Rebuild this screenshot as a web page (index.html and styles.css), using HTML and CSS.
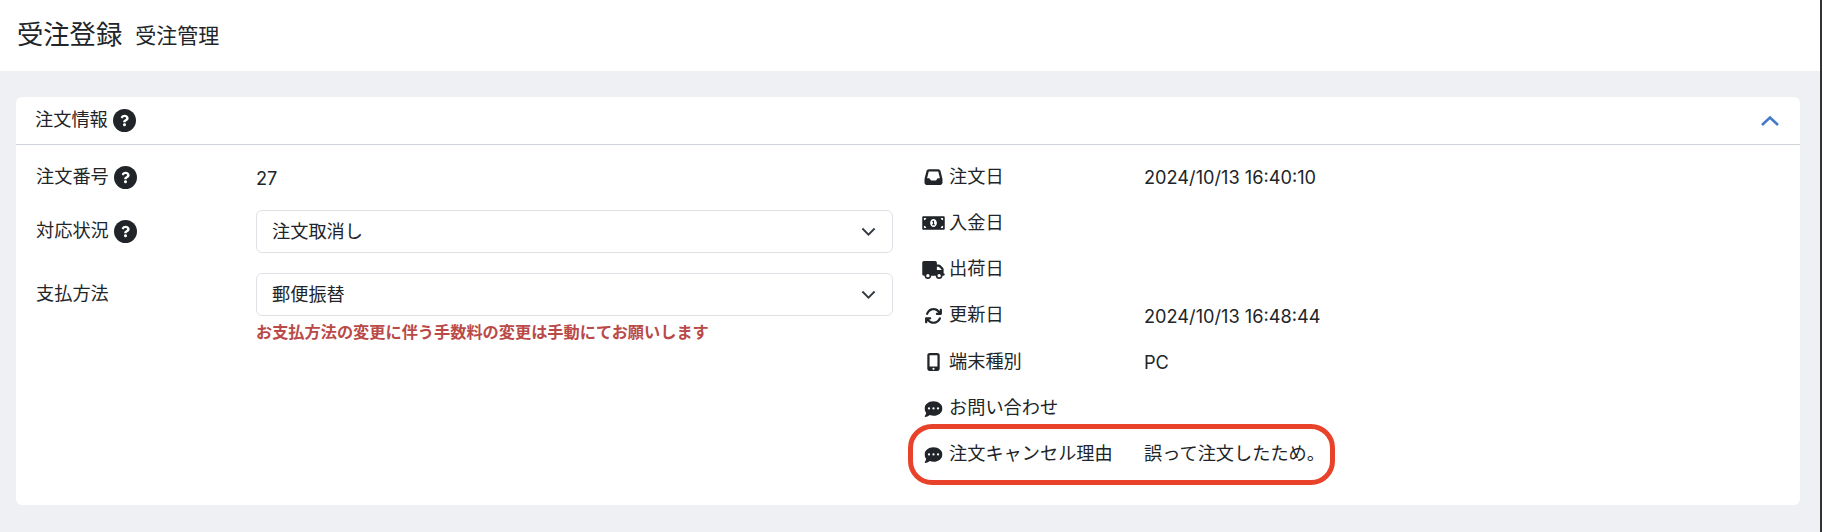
FILE: index.html
```html
<!DOCTYPE html>
<html lang="ja">

<head>
    <meta charset="UTF-8">
    <title>受注登録</title>
    <link rel="stylesheet" href="styles.css">
</head>

<body>
    <header class="page-head">
        <h1>受注登録</h1>
        <span class="sub">受注管理</span>
    </header>
    <main class="content">
        <section class="card">
            <div class="card-head">
                <span class="with-help">注文情報
                    <svg class="help" viewBox="0 0 512 512"><use href="#i-help"></use></svg>
                </span>
                <svg class="collapse" viewBox="0 0 20 12"><path d="M2 10 L10 2.5 L18 10"></path></svg>
            </div>
            <div class="card-body">
                <div class="col-left">
                    <div class="field field-text">
                        <div class="field-label with-help">注文番号
                            <svg class="help" viewBox="0 0 512 512"><use href="#i-help"></use></svg>
                        </div>
                        <div class="field-value num">27</div>
                    </div>
                    <div class="field">
                        <div class="field-label with-help">対応状況
                            <svg class="help" viewBox="0 0 512 512"><use href="#i-help"></use></svg>
                        </div>
                        <div class="field-value">
                            <div class="select">注文取消し
                                <svg class="caret" viewBox="0 0 16 10"><path d="M1.5 1.500 L8 8 L14.500 1.500"></path></svg>
                            </div>
                        </div>
                    </div>
                    <div class="field">
                        <div class="field-label">支払方法</div>
                        <div class="field-value">
                            <div class="select">郵便振替
                                <svg class="caret" viewBox="0 0 16 10"><path d="M1.5 1.500 L8 8 L14.500 1.500"></path></svg>
                            </div>
                            <p class="note">お支払方法の変更に伴う手数料の変更は手動にてお願いします</p>
                        </div>
                    </div>
                </div>
                <div class="col-right">
                    <div class="info">
                        <div class="info-label">
                            <svg class="ico" viewBox="0 0 512 512"><path d="M121 32C91.600 32 66 52 58.900 80.500L1.900 308.400C.6 313.500 0 318.700 0 323.900V416c0 35.300 28.700 64 64 64H448c35.300 0 64-28.700 64-64V323.900c0-5.200-.6-10.400-1.900-15.500l-57-227.900C446 52 420.400 32 391 32H121zm0 64H391l48 192H387.800c-12.100 0-23.200 6.800-28.600 17.700l-14.300 28.600c-5.400 10.800-16.500 17.700-28.600 17.700H195.800c-12.100 0-23.200-6.800-28.600-17.700l-14.300-28.600c-5.400-10.800-16.500-17.700-28.600-17.700H73L121 96z"></path></svg>
                            注文日</div>
                        <div class="info-value num">2024/10/13 16:40:10</div>
                    </div>
                    <div class="info">
                        <div class="info-label">
                            <svg class="ico" viewBox="0 0 640 512"><path d="M352 288h-16v-88c0-4.420-3.580-8-8-8h-13.580c-4.740 0-9.370 1.400-13.310 4.030l-15.330 10.220a7.994 7.994 0 0 0-2.220 11.090l8.880 13.310a7.994 7.994 0 0 0 11.090 2.220l.47-.31V288h-16c-4.420 0-8 3.580-8 8v16c0 4.420 3.580 8 8 8h64c4.420 0 8-3.580 8-8v-16c0-4.420-3.580-8-8-8zM608 64H32C14.330 64 0 78.330 0 96v320c0 17.670 14.330 32 32 32h576c17.670 0 32-14.330 32-32V96c0-17.670-14.330-32-32-32zM48 400v-64c35.350 0 64 28.650 64 64H48zm0-224v-64h64c0 35.350-28.650 64-64 64zm272 192c-53.020 0-96-50.150-96-112 0-61.860 42.980-112 96-112s96 50.140 96 112c0 61.880-43 112-96 112zm272 32h-64c0-35.350 28.650-64 64-64v64zm0-224c-35.350 0-64-28.650-64-64h64v64z"></path></svg>
                            入金日</div>
                    </div>
                    <div class="info">
                        <div class="info-label">
                            <svg class="ico" viewBox="0 0 640 512"><path d="M48 0C21.500 0 0 21.500 0 48V368c0 26.500 21.500 48 48 48H64c0 53 43 96 96 96s96-43 96-96H384c0 53 43 96 96 96s96-43 96-96h32c17.700 0 32-14.300 32-32s-14.300-32-32-32V288 256 237.300c0-17-6.700-33.300-18.700-45.300L512 114.700c-12-12-28.300-18.700-45.300-18.700H416V48c0-26.500-21.500-48-48-48H48zM416 160h50.700L544 237.300V256H416V160zM112 416a48 48 0 1 1 96 0 48 48 0 1 1 -96 0zm368-48a48 48 0 1 1 0 96 48 48 0 1 1 0-96z"></path></svg>
                            出荷日</div>
                    </div>
                    <div class="info">
                        <div class="info-label">
                            <svg class="ico" viewBox="0 0 512 512"><path d="M105.100 202.600c7.700-21.800 20.200-42.300 37.800-59.800c62.500-62.500 163.800-62.500 226.300 0L386.300 160H352c-17.700 0-32 14.300-32 32s14.300 32 32 32H463.500c0 0 0 0 0 0h.4c17.700 0 32-14.300 32-32V80c0-17.700-14.300-32-32-32s-32 14.300-32 32v35.200L414.400 97.600c-87.500-87.500-229.300-87.500-316.800 0C73.200 122 55.600 150.700 44.800 181.400c-5.900 16.700 2.900 34.900 19.500 40.800s34.900-2.900 40.800-19.500zM39 289.300c-5 1.500-9.800 4.200-13.700 8.200c-4 4-6.700 8.800-8.100 14c-.3 1.200-.6 2.500-.8 3.800c-.3 1.700-.4 3.400-.4 5.100V432c0 17.700 14.300 32 32 32s32-14.300 32-32V396.900l17.600 17.500 0 0c87.500 87.400 229.300 87.400 316.700 0c24.400-24.400 42.100-53.100 52.900-83.700c5.900-16.700-2.900-34.900-19.500-40.800s-34.900 2.900-40.800 19.500c-7.700 21.800-20.200 42.300-37.800 59.800c-62.500 62.500-163.800 62.500-226.300 0l-.1-.1L125.600 352H160c17.700 0 32-14.300 32-32s-14.300-32-32-32H48.400c-1.600 0-3.200 .1-4.800 .3s-3.100 .5-4.600 1z"></path></svg>
                            更新日</div>
                        <div class="info-value num">2024/10/13 16:48:44</div>
                    </div>
                    <div class="info">
                        <div class="info-label">
                            <svg class="ico" viewBox="0 0 384 512"><path d="M16 64C16 28.700 44.700 0 80 0H304c35.300 0 64 28.700 64 64V448c0 35.300-28.700 64-64 64H80c-35.300 0-64-28.700-64-64V64zM224 448a32 32 0 1 0 -64 0 32 32 0 1 0 64 0zM304 64H80V384H304V64z"></path></svg>
                            端末種別</div>
                        <div class="info-value num">PC</div>
                    </div>
                    <div class="info">
                        <div class="info-label">
                            <svg class="ico" viewBox="0 0 512 512"><use href="#i-comment"></use></svg>
                            お問い合わせ</div>
                    </div>
                    <div class="info info-marked">
                        <div class="info-label">
                            <svg class="ico" viewBox="0 0 512 512"><use href="#i-comment"></use></svg>
                            注文キャンセル理由</div>
                        <div class="info-value">誤って注文したため。</div>
                    </div>
                </div>
            </div>
        </section>
    </main>

    <svg class="defs" width="0" height="0">
        <symbol id="i-help" viewBox="0 0 512 512">
            <circle cx="256" cy="256" r="256" fill="#212529"></circle>
            <path fill="#fff" transform="translate(64 62) scale(.75)" d="M262.655 90c-54.497 0-89.255 22.957-116.549 63.758-3.536 5.286-2.353 12.415 2.715 16.258l34.699 26.31c5.205 3.947 12.621 3.008 16.665-2.122 17.864-22.658 30.113-35.797 57.303-35.797 20.429 0 45.698 13.148 45.698 32.958 0 14.976-12.363 22.667-32.534 33.976C247.128 238.528 216 254.941 216 296v4c0 6.627 5.373 12 12 12h56c6.627 0 12-5.373 12-12v-1.333c0-28.462 83.186-29.647 83.186-106.667 0-58.002-60.165-102-116.531-102zM256 338c-25.365 0-46 20.635-46 46 0 25.364 20.635 46 46 46s46-20.636 46-46c0-25.365-20.635-46-46-46z"></path>
        </symbol>
        <symbol id="i-comment" viewBox="0 0 512 512">
            <path d="M256 448c141.400 0 256-93.100 256-208S397.400 32 256 32S0 125.100 0 240c0 45.100 17.700 86.800 47.700 120.900c-1.900 24.500-11.400 46.300-21.400 62.900c-5.500 9.200-11.100 16.600-15.200 21.600c-2.100 2.500-3.700 4.400-4.900 5.700c-.6 .6-1 1.100-1.300 1.400l-.3 .3c-4.600 4.600-5.900 11.400-3.400 17.400c2.500 6 8.300 9.900 14.800 9.900c28.700 0 57.600-8.900 81.600-19.300c22.900-10 42.400-21.900 54.300-30.600c31.800 11.500 67 17.900 104.100 17.900zM128 208a32 32 0 1 1 0 64 32 32 0 1 1 0-64zm128 0a32 32 0 1 1 0 64 32 32 0 1 1 0-64zm96 32a32 32 0 1 1 64 0 32 32 0 1 1 -64 0z"></path>
        </symbol>
    </svg>
</body>

</html>
```

FILE: styles.css
```css
html,
body {
    margin: 0;
    height: 100%;
}

body {
    box-sizing: border-box;
    border-right: 2px solid #333;
    background-color: #eff0f4;
    color: #212529;
    font-family: "Liberation Sans", "Noto Sans CJK JP", sans-serif;
    font-size: 18.2px;
    line-height: 1.5;
}

.defs {
    position: absolute;
}

.page-head {
    display: flex;
    align-items: center;
    gap: 13px;
    height: 71px;
    padding-left: 17px;
    background-color: #fff;
}

.page-head h1 {
    margin: 0;
    font-size: 26.3px;
    font-weight: 400;
}

.page-head .sub {
    font-size: 21px;
}

.content {
    padding: 26px 20px 25px 16px;
}

.card {
    height: 408px;
    box-sizing: border-box;
    background-color: #fff;
    border-radius: 6px;
}

.card-head {
    display: flex;
    justify-content: space-between;
    align-items: center;
    height: 48px;
    box-sizing: border-box;
    padding: 0 20px 0 19px;
    border-bottom: 1px solid #ced4da;
}

.with-help {
    display: flex;
    align-items: center;
    gap: 5px;
}

.help {
    width: 23px;
    height: 23px;
}

.collapse {
    width: 20px;
    height: 12px;
    fill: none;
    stroke: #437ac7;
    stroke-width: 2.6;
}

.card-body {
    display: flex;
    padding: 9px 0 0 20px;
}

.col-left {
    width: 857px;
}

.field {
    display: flex;
    margin-bottom: 19.7px;
}

.field-text {
    margin-bottom: 10px;
}

.field-label {
    width: 220px;
    height: 43px;
    flex-shrink: 0;
    line-height: 43px;
}

.field-text .field-label,
.field-text .field-value {
    height: 46px;
}

.field-value {
    width: 637px;
}

.field-text .field-value {
    line-height: 48px;
}

.num {
    font-family: Inter, "Liberation Sans", sans-serif;
    font-size: 18.2px;
    line-height: 48px;
}

.select {
    display: flex;
    justify-content: space-between;
    align-items: center;
    height: 43px;
    box-sizing: border-box;
    padding: 1px 16px 0 15px;
    border: 1px solid #dee2e6;
    border-radius: 6px;
    line-height: 1;
}

.caret {
    width: 15px;
    height: 9.5px;
    fill: none;
    stroke: #343a40;
    stroke-width: 2;
}

.note {
    margin: 1px 0 0;
    color: #b94a48;
    font-size: 16.2px;
    font-weight: 700;
    line-height: 30px;
}

.col-right {
    padding-left: 29px;
}

.info {
    display: flex;
    align-items: center;
    height: 46.3px;
}

.info-label {
    display: flex;
    align-items: center;
    width: 222px;
    gap: 4px;
}

.ico {
    width: 23px;
    height: 18px;
    flex-shrink: 0;
    fill: #212529;
}

.info-marked {
    position: relative;
}

.info-marked::after {
    content: "";
    position: absolute;
    left: -14px;
    top: -8px;
    width: 427px;
    height: 61px;
    box-sizing: border-box;
    border: 5px solid #e8432a;
    border-radius: 24px;
}
```
